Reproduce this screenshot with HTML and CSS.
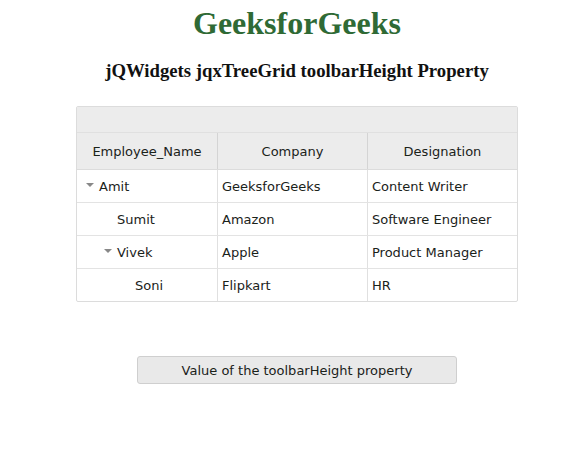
FILE: index.html
```html
<!DOCTYPE html>
<html>
<head>
<meta charset="utf-8">
<link rel="stylesheet" href="styles.css">
</head>
<body>
<div class="page">
  <h1 class="title">GeeksforGeeks</h1>
  <h3 class="subtitle">jQWidgets jqxTreeGrid toolbarHeight Property</h3>
  <div class="grid">
    <div class="toolbar"></div>
    <div class="row head">
      <div class="cell c1">Employee_Name</div>
      <div class="cell c2">Company</div>
      <div class="cell c3">Designation</div>
    </div>
    <div class="row">
      <div class="cell c1 lvl0"><span class="tog"></span>Amit</div>
      <div class="cell c2">GeeksforGeeks</div>
      <div class="cell c3">Content Writer</div>
    </div>
    <div class="row">
      <div class="cell c1 lvl1"><span class="tog blank"></span>Sumit</div>
      <div class="cell c2">Amazon</div>
      <div class="cell c3">Software Engineer</div>
    </div>
    <div class="row">
      <div class="cell c1 lvl1"><span class="tog"></span>Vivek</div>
      <div class="cell c2">Apple</div>
      <div class="cell c3">Product Manager</div>
    </div>
    <div class="row last">
      <div class="cell c1 lvl2"><span class="tog blank"></span>Soni</div>
      <div class="cell c2">Flipkart</div>
      <div class="cell c3">HR</div>
    </div>
  </div>
  <div class="actions">
    <button class="btn">Value of the toolbarHeight property</button>
  </div>
</div>
</body>
</html>
```
FILE: styles.css
```css
html, body {
  margin: 0;
  padding: 0;
  background: #fff;
  overflow: hidden;
}
.page {
  width: 578px;
  margin-left: 8px;
  display: flex;
  flex-direction: column;
  align-items: center;
}
.title {
  margin: 5px 0 0;
  font-family: "Liberation Serif", serif;
  font-size: 32px;
  font-weight: bold;
  line-height: 37px;
  color: #2f6a35;
}
.subtitle {
  margin: 18px 0 0;
  font-family: "Liberation Serif", serif;
  font-size: 18.72px;
  font-weight: bold;
  line-height: 22px;
  color: #111;
}
.grid {
  margin-top: 24px;
  width: 440px;
  border: 1px solid #dcdcdc;
  border-radius: 2px;
  font-family: "DejaVu Sans", Verdana, sans-serif;
  font-size: 13px;
  color: #1a221a;
}
.toolbar {
  height: 25px;
  background: #ececec;
  border-bottom: 1px solid #e0e0e0;
}
.row {
  display: flex;
  height: 32px;
  border-bottom: 1px solid #e3e3e3;
}
.row.last {
  border-bottom: none;
}
.row.head {
  height: 36px;
  background: #ececec;
  border-bottom: 1px solid #dcdcdc;
}
.cell {
  display: flex;
  align-items: center;
  padding-left: 4px;
  box-sizing: border-box;
  white-space: nowrap;
}
.head .cell {
  justify-content: center;
  padding-left: 0;
}
.c1 { width: 141px; border-right: 1px solid #e0e0e0; }
.c2 { width: 150px; border-right: 1px solid #e0e0e0; }
.c3 { flex: 1; }
.lvl0 { padding-left: 8px; }
.lvl1 { padding-left: 26px; }
.lvl2 { padding-left: 44px; }
.tog {
  display: inline-block;
  width: 14px;
  height: 10px;
  position: relative;
}
.tog::before {
  content: "";
  position: absolute;
  left: 1px;
  top: 2px;
  border-left: 4px solid transparent;
  border-right: 4px solid transparent;
  border-top: 4px solid #888;
}
.tog.blank::before {
  display: none;
}
.head .cell:not(.c3) {
  border-right-color: #d4d4d4;
}
.actions {
  margin-top: 54px;
}
.btn {
  width: 320px;
  height: 28px;
  background: #e9e9e9;
  border: 1px solid #cfcfcf;
  border-radius: 3px;
  font-family: "DejaVu Sans", Verdana, sans-serif;
  font-size: 13px;
  color: #1a221a;
  padding: 0;
}
```
